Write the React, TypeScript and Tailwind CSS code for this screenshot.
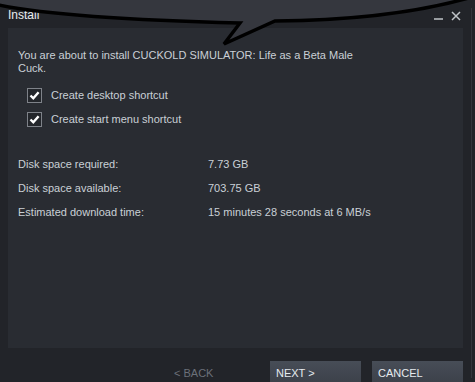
import React from "react";

function Check() {
  return (
    <div className="w-[15px] h-[15px] border border-[#7e8289] bg-[#23262b] flex items-center justify-center">
      <svg width="11" height="11" viewBox="0 0 11 11">
        <path d="M1.5 5.5 L4.3 8.3 L9.6 2.2" fill="none" stroke="#ffffff" strokeWidth="2.4" />
      </svg>
    </div>
  );
}

export default function App() {
  return (
    <div className="relative w-[475px] h-[382px] bg-[#222429] overflow-hidden font-['Liberation_Sans',Arial,sans-serif] text-[11px] text-[#c9d0d6]">
      {/* title bar */}
      <div className="h-[28px] flex items-start justify-between pl-[8px] pr-[14px] pt-[8px]">
        <span className="text-[12px] leading-[12px] pt-[1px] text-[#e8ecef]">Install</span>
        <div className="flex items-start gap-[7px] pt-[3px]">
          <svg width="10" height="10" viewBox="0 0 10 10">
            <path d="M0 8 H9" stroke="#c0c4c8" strokeWidth="1.5" />
          </svg>
          <svg width="10" height="10" viewBox="0 0 10 10">
            <path d="M1 1 L9 9 M9 1 L1 9" stroke="#c0c4c8" strokeWidth="1.5" />
          </svg>
        </div>
      </div>

      {/* panel */}
      <div className="ml-[8px] mr-[12px] h-[320px] bg-[#292c32] pl-[10px] pt-[21px]">
        <div className="leading-[13px] w-[345px]">
          You are about to install CUCKOLD SIMULATOR: Life as a Beta Male Cuck.
        </div>
        <div className="mt-[8px]">
          <div className="h-[24px] flex items-center pl-[9px] gap-[9px]">
            <Check />
            <span>Create desktop shortcut</span>
          </div>
          <div className="h-[24px] flex items-center pl-[9px] gap-[9px]">
            <Check />
            <span>Create start menu shortcut</span>
          </div>
        </div>
        <div className="mt-[21px]">
          <div className="h-[24px] flex items-center">
            <span className="w-[190px]">Disk space required:</span>
            <span>7.73 GB</span>
          </div>
          <div className="h-[24px] flex items-center">
            <span className="w-[190px]">Disk space available:</span>
            <span>703.75 GB</span>
          </div>
          <div className="h-[24px] flex items-center">
            <span className="w-[190px]">Estimated download time:</span>
            <span>15 minutes 28 seconds at 6 MB/s</span>
          </div>
        </div>
      </div>

      {/* buttons */}
      <div className="mt-[13px] flex justify-end gap-[11px] mr-[12px]">
        <div className="w-[91px] h-[24px] flex items-center pl-[6px] text-[#6b7079]">&lt; BACK</div>
        <div className="w-[91px] h-[24px] flex items-center pl-[6px] text-[#e6ebef] bg-gradient-to-b from-[#474d57] to-[#3b4049]">NEXT &gt;</div>
        <div className="w-[91px] h-[24px] flex items-center pl-[6px] text-[#e6ebef] bg-gradient-to-b from-[#474d57] to-[#3b4049]">CANCEL</div>
      </div>

      {/* right border */}
      <div className="absolute top-[8px] right-[3px] w-[1px] h-[370px] bg-[#33363c]" />

      {/* speech bubble overlay */}
      <svg className="absolute top-0 left-0" width="475" height="50" viewBox="0 0 475 50">
        <path
          d="M -6 -6 L -6 4 C 40 14 120 20 240 23 L 224 44 L 275 21 Q 400 20 482 -6 Z"
          fill="#35373e"
          stroke="#000000"
          strokeWidth="3.5"
          strokeLinejoin="miter"
        />
      </svg>
    </div>
  );
}
